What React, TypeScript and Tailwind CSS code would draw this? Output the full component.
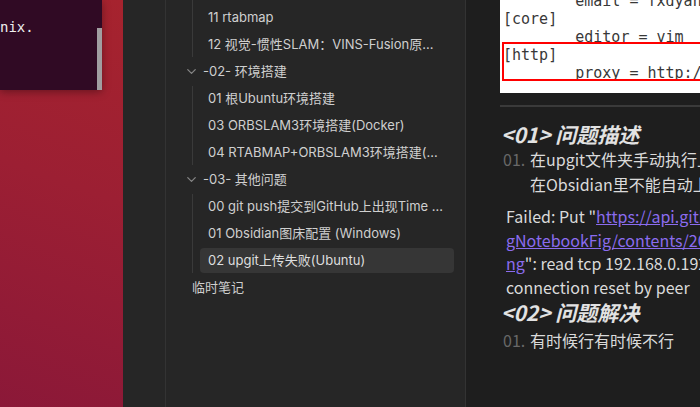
import { ChevronDown } from 'lucide-react'

const sans = "font-['Noto_Sans_CJK_SC','Noto_Sans',sans-serif]"
const ui = "font-['Inter','Noto_Sans_CJK_SC',sans-serif]"
const mono = "font-['DejaVu_Sans_Mono','Liberation_Mono',monospace]"

type Item = { label: string; active?: boolean }

function FileRow({ label, active }: Item) {
  return (
    <div
      className={`mb-[2px] flex h-[25px] items-center rounded-[4px] pl-[8px] pr-[8px] ${
        active ? 'bg-[#363636] text-[#dedede]' : 'text-[#cfcfcf]'
      }`}
    >
      <span className="truncate">{label}</span>
    </div>
  )
}

function FolderRow({ label }: { label: string }) {
  return (
    <div className="relative mb-[2px] flex h-[25px] items-center pl-[37px] text-[#cfcfcf]">
      <ChevronDown size={15} strokeWidth={2} className="absolute left-[18px] top-[5px] text-[#858585]" />
      <span>{label}</span>
    </div>
  )
}

function Children({ items, first }: { items: Item[]; first?: boolean }) {
  return (
    <div className={`ml-[26px] border-l border-[#3a3a3a] pl-[7px] ${first ? 'pt-[5px]' : ''}`}>
      {items.map((it) => (
        <FileRow key={it.label} {...it} />
      ))}
    </div>
  )
}

function Desktop() {
  return (
    <div className="relative h-full w-[123px] shrink-0 bg-[linear-gradient(200deg,#a6232e_0%,#9c1f33_45%,#8b1838_100%)]">
      {/* terminal window peeking in */}
      <div className={`relative h-[90px] w-[102px] bg-[#300a24] pt-[18px] text-[14px] leading-[18px] text-[#eeeeee] shadow-[0_2px_8px_rgba(0,0,0,0.35)] ${mono}`}>
        nix.
        <div className="absolute right-0 top-[28px] h-[62px] w-[5px] bg-[#a19ea1]" />
      </div>
    </div>
  )
}

function Sidebar() {
  return (
    <div className={`h-full w-[300px] shrink-0 border-r border-[#333333] bg-[#262626] pr-[11px] text-[13px] ${ui}`}>
      <Children first items={[{ label: '11 rtabmap' }, { label: '12 视觉-惯性SLAM：VINS-Fusion原理与代码解析' }]} />
      <FolderRow label="-02- 环境搭建" />
      <Children
        items={[
          { label: '01 根Ubuntu环境搭建' },
          { label: '03 ORBSLAM3环境搭建(Docker)' },
          { label: '04 RTABMAP+ORBSLAM3环境搭建(Docker)' },
        ]}
      />
      <FolderRow label="-03- 其他问题" />
      <Children
        items={[
          { label: '00 git push提交到GitHub上出现Time out' },
          { label: '01 Obsidian图床配置 (Windows)' },
          { label: '02 upgit上传失败(Ubuntu)', active: true },
        ]}
      />
      <div className="flex h-[25px] items-center pl-[26px] text-[#cfcfcf]">临时笔记</div>
    </div>
  )
}

function CodeShot() {
  const lines = ['        email = fxdyang@163.com', '[core]', '        editor = vim', '[http]', '        proxy = http://127.0.0.1:7890']
  return (
    <div className={`relative flex h-[93px] w-[260px] flex-col justify-end overflow-hidden bg-white pb-[11px] pl-[3px] text-[15px] leading-[18px] text-[#383838] ${mono}`}>
      {lines.map((l) => (
        <div key={l} className="whitespace-pre">
          {l}
        </div>
      ))}
      {/* red annotation box */}
      <div className="absolute left-[2px] top-[42px] h-[39px] w-[260px] border-2 border-[#ff0000]" />
    </div>
  )
}

function Editor() {
  return (
    <div className={`h-full min-w-0 flex-1 overflow-hidden bg-[#1e1e1e] pl-[34px] text-[#dadada] ${sans}`}>
      <div className="w-[400px]">
        <CodeShot />
        <div className="mt-[12px] h-[2px] w-[260px] bg-[#3a3a3a]" />
        <h2 className="mt-[14px] pl-[1px] text-[21px] font-bold italic leading-[26px] text-[#e2e2e2]">&lt;01&gt; 问题描述</h2>
        <div className="flex text-[16px] leading-[25px]">
          <span className="w-[30px] shrink-0 pl-[3px] text-[#686868]">01.</span>
          <div className="whitespace-nowrap">
            <div>在upgit文件夹手动执行上传成功，</div>
            <div>在Obsidian里不能自动上传</div>
          </div>
        </div>
        <div className="mt-[8px] whitespace-nowrap pl-[6px] text-[16px] leading-[23.5px]">
          <div>
            Failed: Put "<span className="text-[#8b6cef] underline">https://api.github.com/repos/fxdyang/Obsidia</span>
          </div>
          <div>
            <span className="text-[#8b6cef] underline">gNotebookFig/contents/2023/05/image.p</span>
          </div>
          <div>
            <span className="text-[#8b6cef] underline">ng</span>": read tcp 192.168.0.192:54321-&gt;
          </div>
          <div>connection reset by peer</div>
        </div>
        <h2 className="pl-[1px] text-[21px] font-bold italic leading-[26px] text-[#e2e2e2]">&lt;02&gt; 问题解决</h2>
        <div className="mt-[3px] flex text-[16px] leading-[25px]">
          <span className="w-[30px] shrink-0 pl-[3px] text-[#686868]">01.</span>
          <span>有时候行有时候不行</span>
        </div>
      </div>
    </div>
  )
}

export default function App() {
  return (
    <div className="flex h-[407px] w-[700px] overflow-hidden bg-[#262626]">
      <Desktop />
      <div className="flex h-full min-w-0 flex-1 shadow-[-8px_0_12px_rgba(0,0,0,0.4)]">
        {/* ribbon */}
        <div className="h-full w-[43px] shrink-0 border-r border-[#333333] bg-[#262626]" />
        <Sidebar />
        <Editor />
      </div>
    </div>
  )
}
